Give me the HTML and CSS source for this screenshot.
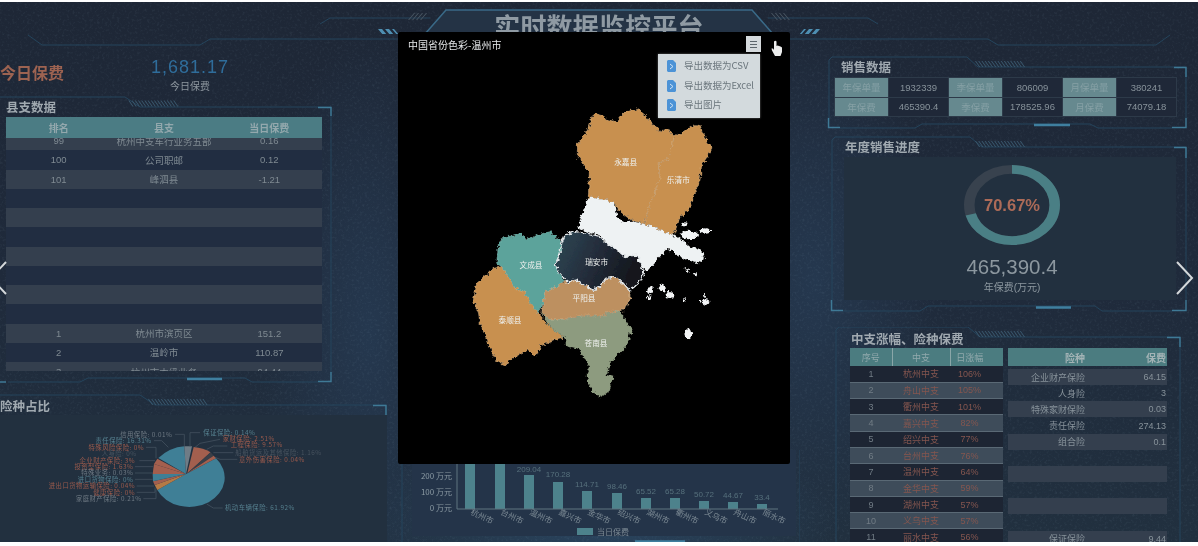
FILE: index.html
```html
<!DOCTYPE html>
<html lang="zh-CN">
<head>
<meta charset="utf-8">
<title>实时数据监控平台</title>
<link rel="stylesheet" href="styles.css">
</head>
<body>
<div class="screen">
  <svg class="noise" width="1198" height="540" aria-hidden="true">
    <defs>
      <filter id="speckle" x="0" y="0" width="100%" height="100%">
        <feTurbulence type="fractalNoise" baseFrequency="0.4" numOctaves="2" seed="7"/>
        <feColorMatrix type="matrix" values="0 0 0 0 0.42  0 0 0 0 0.62  0 0 0 0 0.75  1.6 0 0 0 -0.82"/>
      </filter>
    </defs>
    <rect width="1198" height="540" filter="url(#speckle)"/>
  </svg>

  <svg class="head-deco" width="1198" height="50" viewBox="0 2 1198 50" aria-hidden="true">
    <g>
      <path class="line" d="M28 35L42 45H200L210 39H416"/>
      <path class="line" d="M320 24L330 18H430"/>
      <path class="hatch-lit" transform="translate(378 29) skewX(40)" d="M0 2.500H16"/>
      <path class="hatch-gray" transform="translate(414 13) skewX(-40)" d="M0 3.500H16"/>
    </g>
    <g transform="matrix(-1 0 0 1 1198 0)">
      <path class="line" d="M28 35L42 45H200L210 39H416"/>
      <path class="line" d="M320 24L330 18H430"/>
      <path class="hatch-lit" transform="translate(378 29) skewX(40)" d="M0 2.500H16"/>
      <path class="hatch-gray" transform="translate(414 13) skewX(-40)" d="M0 3.500H16"/>
    </g>
    <path class="plate" d="M425 34L446 10H752L773 34"/>
  </svg>

  <header class="top"><h1 class="top-title">实时数据监控平台</h1></header>

  <main class="columns">
    <section class="col-left">
      <div class="today">
        <div class="today-name">今日保费</div>
        <div class="today-fig">
          <div class="today-num">1,681.17</div>
          <div class="today-label">今日保费</div>
        </div>
      </div>

      <div class="panel panel-county">
        <svg class="frame" width="332" height="286" viewBox="0 97 332 286" aria-hidden="true">
          <path class="line" d="M0 97H125L140 107H331V375"/>
          <path class="hatch" transform="translate(128 100) skewX(35)" d="M0 3.500H48"/>
          <path class="lit" d="M318 107.500H331V116"/>
          <path class="line" d="M8 382H80L88 378H245L252 382H318"/>
          <path class="lit" d="M0 382H6M318 381.500H331V372"/>
          <path class="bar" d="M187 379H222"/>
        </svg>
        <h2 class="panel-title title-county">县支数据</h2>
        <div class="county">
          <div class="county-head"><span>排名</span><span>县支</span><span>当日保费</span></div>
          <div class="county-body">
            <div class="county-row"><span>99</span><span>杭州中支车行业务五部</span><span>0.16</span></div>
            <div class="county-row"><span>100</span><span>公司职邮</span><span>0.12</span></div>
            <div class="county-row"><span>101</span><span>峰泗县</span><span>-1.21</span></div>
            <div class="county-row"></div>
            <div class="county-row"></div>
            <div class="county-row"></div>
            <div class="county-row"></div>
            <div class="county-row"></div>
            <div class="county-row"></div>
            <div class="county-row"></div>
            <div class="county-row"><span>1</span><span>杭州市滨页区</span><span>151.2</span></div>
            <div class="county-row"><span>2</span><span>温岭市</span><span>110.87</span></div>
            <div class="county-row"><span>3</span><span>杭州市本级业务</span><span>94.44</span></div>
          </div>
        </div>
      </div>

      <div class="panel panel-share">
        <svg class="frame" width="388" height="147" viewBox="0 395 388 147" aria-hidden="true">
          <path class="line" d="M0 395H140L155 405H386V542"/>
          <path class="hatch" transform="translate(148 399) skewX(35)" d="M0 3H56"/>
          <path class="lit" d="M373 405.500H386V420M386 530V542"/>
          <path class="bar" d="M217 540.500H257"/>
        </svg>
        <h2 class="panel-title title-share">险种占比</h2>
        <svg class="pie" width="387" height="127" viewBox="0 75 1161 381" role="img" aria-label="险种占比饼图">
          <path class="pie-teal" d="M558 252L648 205A106 88 0 1 1 472 300Z"/>
          <path class="pie-orange" d="M558 252L472 300L464 285Z"/>
          <path class="pie-coral" d="M558 252L464 285L459 274Z"/>
          <path class="pie-teal" d="M558 252L459 274L458 252Z"/>
          <path class="pie-coral" d="M558 252L458 252L462 222Z"/>
          <path class="pie-coral" d="M558 252L462 222L472 206Z"/>
          <path class="pie-teal" d="M558 252L475 204Q510 172 553 169Z"/>
          <path class="pie-gray" d="M558 252L553 169H576Z"/>
          <path class="pie-coral" d="M562 250L581 171Q610 174 632 187Z"/>
          <path class="pie-dark" d="M562 250L632 187L641 197Z"/>
          <path class="pie-coral" d="M562 250L641 197L648 205Z"/>
          <g class="leader">
            <path d="M525 133H553V170"/><path d="M600 128H570V170"/><path d="M660 148L600 160L585 172"/>
            <path d="M682 168H640L620 178"/><path d="M700 188H640"/><path d="M712 208H660L645 202"/>
            <path d="M462 152H485L505 172"/><path d="M438 172H468V205"/><path d="M418 212H465"/>
            <path d="M405 230H460"/><path d="M405 249H458"/><path d="M405 268H458"/>
            <path d="M410 288H462"/><path d="M410 307H465V292"/><path d="M430 326H468V298"/>
            <path d="M620 342L640 354H668"/>
          </g>
          <g class="pie-labels">
            <text class="l-gray end" x="517" y="140">信用保险: 0.01%</text>
            <text class="l-teal" x="610" y="135">保证保险: 0.14%</text>
            <text class="l-coral" x="668" y="152">家财保险: 2.51%</text>
            <text class="l-coral" x="692" y="172">工程保险: 9.57%</text>
            <text class="l-dim" x="706" y="194">船舶货运及其他保险: 1.16%</text>
            <text class="l-coral" x="717" y="215">意外伤害保险: 0.04%</text>
            <text class="l-teal end" x="455" y="159">责任保险: 16.31%</text>
            <text class="l-coral end" x="432" y="179">特殊风险保险: 0%</text>
            <text class="l-dim end" x="410" y="199">人身险: 0%</text>
            <text class="l-coral end" x="405" y="219">企业财产保险: 3%</text>
            <text class="l-coral end" x="400" y="237">投资型保险: 1.63%</text>
            <text class="l-gray end" x="400" y="256">特殊业务: 0.03%</text>
            <text class="l-teal end" x="400" y="275">进口货物保险: 0%</text>
            <text class="l-coral end" x="405" y="295">进出口货物运输保险: 0.04%</text>
            <text class="l-coral end" x="405" y="314">健康保险: 0%</text>
            <text class="l-gray end" x="425" y="333">家庭财产保险: 0.21%</text>
            <text class="l-teal" x="675" y="359">机动车辆保险: 61.92%</text>
          </g>
        </svg>
      </div>
    </section>

    <section class="col-center">
      <div class="panel panel-bars">
        <svg class="bars" width="400" height="92" viewBox="400 450 400 92" role="img" aria-label="当日保费柱状图">
          <rect class="bars-bg" x="412" y="450" width="384" height="86"/>
          <path class="line" d="M402 450V542M800 450V542"/>
          <path class="bar" d="M635 541.500H685"/>
          <g class="bar-set">
            <rect x="465" y="450" width="10" height="59"/><rect x="495" y="450" width="10" height="59"/>
            <rect x="524" y="475" width="10" height="34"/><rect x="553" y="482" width="10" height="27"/>
            <rect x="582" y="491" width="10" height="18"/><rect x="612" y="493" width="10" height="16"/>
            <rect x="641" y="498" width="10" height="11"/><rect x="670" y="498" width="10" height="11"/>
            <rect x="699" y="501" width="10" height="8"/><rect x="728" y="502" width="10" height="7"/>
            <rect x="757" y="504" width="10" height="5"/>
          </g>
          <path class="axis" d="M457 460V509H778"/>
          <g class="y-labels">
            <text x="452" y="479">200 万元</text><text x="452" y="495">100 万元</text><text x="452" y="511">0 万元</text>
          </g>
          <g class="bar-values">
            <text x="529" y="472">209.04</text><text x="558" y="477">170.28</text><text x="587" y="487">114.71</text>
            <text x="617" y="489">98.46</text><text x="646" y="494">65.52</text><text x="675" y="494">65.28</text>
            <text x="704" y="497">50.72</text><text x="733" y="498">44.67</text><text x="762" y="500">33.4</text>
          </g>
          <g class="x-labels">
            <text transform="translate(470 514) rotate(25)">杭州市</text><text transform="translate(500 514) rotate(25)">台州市</text>
            <text transform="translate(529 514) rotate(25)">温州市</text><text transform="translate(558 514) rotate(25)">嘉兴市</text>
            <text transform="translate(587 514) rotate(25)">金华市</text><text transform="translate(617 514) rotate(25)">绍兴市</text>
            <text transform="translate(646 514) rotate(25)">湖州市</text><text transform="translate(675 514) rotate(25)">衢州市</text>
            <text transform="translate(704 514) rotate(25)">义乌市</text><text transform="translate(733 514) rotate(25)">舟山市</text>
            <text transform="translate(762 514) rotate(25)">丽水市</text>
          </g>
          <rect class="legend-key" x="577" y="528" width="16" height="7"/>
          <text class="legend-text" x="597" y="535">当日保费</text>
        </svg>
      </div>
    </section>

    <section class="col-right">
      <div class="panel panel-sales">
        <svg class="frame" width="359" height="72" viewBox="828 57 359 72" aria-hidden="true">
          <path class="line" d="M829 128V60L832 57H967L978 67H1186V118"/>
          <path class="hatch" transform="translate(975 61) skewX(35)" d="M0 3H46"/>
          <path class="lit" d="M1174 67.500H1186V77M828.500 118V127.500H840M1172 127.500H1186V118"/>
          <path class="line" d="M840 128H915L922 124H1090L1098 128H1172"/>
          <path class="bar" d="M1034 125H1070"/>
        </svg>
        <h2 class="panel-title title-sales">销售数据</h2>
        <table class="sales">
          <tr><th>年保单量</th><td>1932339</td><th>季保单量</th><td>806009</td><th>月保单量</th><td>380241</td></tr>
          <tr><th>年保费</th><td>465390.4</td><th>季保费</th><td>178525.96</td><th>月保费</th><td>74079.18</td></tr>
        </table>
      </div>

      <div class="panel panel-progress">
        <svg class="frame" width="356" height="175" viewBox="831 137 356 175" aria-hidden="true">
          <path class="line" d="M832 310V140L835 137H970L982 147H1186V300"/>
          <path class="hatch" transform="translate(975 141) skewX(35)" d="M0 3H47"/>
          <path class="lit" d="M1174 147.500H1186V158M831.500 300V310.500H843M1172 310.500H1186V300"/>
          <path class="line" d="M843 311H920L928 306H1095L1102 311H1172"/>
          <path class="bar" d="M1036 307.500H1071"/>
        </svg>
        <h2 class="panel-title title-progress">年度销售进度</h2>
        <div class="progress">
          <div class="donut">
            <svg class="donut-ring" width="96" height="80" viewBox="0 0 100 100" preserveAspectRatio="none" aria-hidden="true">
              <circle class="ring-track" cx="50" cy="50" r="44.500"/>
              <circle class="ring-value" cx="50" cy="50" r="44.500" transform="rotate(-90 50 50)"/>
            </svg>
            <span class="donut-text">70.67%</span>
          </div>
          <div class="progress-num">465,390.4</div>
          <div class="progress-label">年保费(万元)</div>
        </div>
      </div>

      <div class="panel panel-branch">
        <svg class="frame" width="346" height="215" viewBox="835 327 346 215" aria-hidden="true">
          <path class="line" d="M836 542V330L839 327H968L980 337H1180V542"/>
          <path class="hatch" transform="translate(975 331) skewX(35)" d="M0 3H46"/>
          <path class="lit" d="M1167 337.500H1180V347"/>
        </svg>
        <h2 class="panel-title title-branch">中支涨幅、险种保费</h2>
        <div class="branch-tables">
          <table class="rank">
            <thead><tr><th>序号</th><th>中支</th><th>日涨幅</th></tr></thead>
            <tbody>
              <tr><td>1</td><td>杭州中支</td><td>106%</td></tr>
              <tr><td>2</td><td>舟山中支</td><td>105%</td></tr>
              <tr><td>3</td><td>衢州中支</td><td>101%</td></tr>
              <tr><td>4</td><td>嘉兴中支</td><td>82%</td></tr>
              <tr><td>5</td><td>绍兴中支</td><td>77%</td></tr>
              <tr><td>6</td><td>台州中支</td><td>76%</td></tr>
              <tr><td>7</td><td>温州中支</td><td>64%</td></tr>
              <tr><td>8</td><td>金华中支</td><td>59%</td></tr>
              <tr><td>9</td><td>湖州中支</td><td>57%</td></tr>
              <tr><td>10</td><td>义乌中支</td><td>57%</td></tr>
              <tr><td>11</td><td>丽水中支</td><td>56%</td></tr>
            </tbody>
          </table>
          <div class="kinds">
            <div class="kinds-head"><span>险种</span><span>保费</span></div>
            <div class="kinds-row"><span>企业财产保险</span><span>64.15</span></div>
            <div class="kinds-row"><span>人身险</span><span>3</span></div>
            <div class="kinds-row"><span>特殊家财保险</span><span>0.03</span></div>
            <div class="kinds-row"><span>责任保险</span><span>274.13</span></div>
            <div class="kinds-row"><span>组合险</span><span>0.1</span></div>
            <div class="kinds-row"></div>
            <div class="kinds-row"></div>
            <div class="kinds-row"></div>
            <div class="kinds-row"></div>
            <div class="kinds-row"></div>
            <div class="kinds-row"><span>保证保险</span><span>9.44</span></div>
          </div>
        </div>
      </div>
    </section>
  </main>

  <svg class="chevron chevron-left" width="8" height="36" viewBox="0 0 8 36" aria-hidden="true"><path d="M6 2L-9 18L6 34"/></svg>
  <svg class="chevron chevron-right" width="20" height="36" viewBox="0 0 20 36" aria-hidden="true"><path d="M2 2L17 18L2 34"/></svg>

  <div class="modal">
    <div class="modal-head">
      <div class="modal-title">中国省份色彩-温州市</div>
      <button class="menu-btn" type="button" aria-label="菜单"><i></i><i></i><i></i></button>
    </div>
    <svg class="map" width="270" height="310" viewBox="0 0 810 930" role="img" aria-label="温州市地图">
      <defs>
        <filter id="rough" x="-5%" y="-5%" width="110%" height="110%">
          <feTurbulence type="fractalNoise" baseFrequency="0.09" numOctaves="3" seed="4"/>
          <feDisplacementMap in="SourceGraphic" scale="18" xChannelSelector="R" yChannelSelector="G"/>
        </filter>
        <linearGradient id="ruian" x1="0" y1="0" x2="1" y2="0.3">
          <stop offset="0" stop-color="#2d4a55"/>
          <stop offset="0.45" stop-color="#26303f"/>
          <stop offset="1" stop-color="#12161c"/>
        </linearGradient>
      </defs>
      <g filter="url(#rough)">
        <polygon class="m-ochre" points="395,50 410,38 440,58 470,65 490,40 530,25 555,45 575,70 600,95 625,85 640,110 632,150 622,180 598,188 600,235 580,290 565,330 553,372 510,358 480,335 465,310 435,300 385,292 388,215 370,195 352,165 352,130 375,105 390,75"/>
        <polygon class="m-ochre" points="640,110 665,100 695,80 720,75 735,115 757,145 745,165 725,195 720,240 705,280 690,320 660,355 640,405 600,390 555,372 565,330 580,290 600,235 598,188 622,180 632,150"/>
        <polygon class="m-white" points="385,292 435,300 465,310 472,350 490,365 510,362 553,372 600,390 640,405 665,420 690,440 725,450 735,475 715,490 680,480 650,465 625,445 590,480 560,515 540,490 530,465 495,470 470,450 440,430 420,405 385,395 355,385 365,345 375,320"/>
        <polygon class="m-teal" points="130,410 160,408 185,400 195,420 235,405 270,395 300,420 305,430 300,460 285,495 300,520 310,545 280,565 255,575 250,610 235,640 210,610 195,575 165,565 145,530 125,500 110,490 115,435"/>
        <polygon class="m-ochre" points="125,500 145,530 165,565 195,575 210,610 235,640 270,680 312,712 280,720 245,735 225,770 205,750 165,770 135,795 105,780 85,730 60,670 55,635 40,600 50,550 80,525 100,505"/>
        <polygon class="m-sage" points="245,640 270,660 310,660 340,650 385,645 420,650 455,635 480,630 495,660 515,690 500,740 470,770 450,790 440,825 460,830 445,875 425,892 400,880 385,850 380,825 390,800 370,770 355,745 320,740 312,712 270,680"/>
        <polygon class="m-tan" points="320,545 350,540 375,555 400,572 420,560 440,535 465,530 490,550 510,572 510,600 490,630 455,635 420,650 385,645 340,650 310,660 270,660 245,640 255,575 280,565 310,545"/>
        <polygon class="m-dark" points="315,405 345,395 385,400 415,408 440,430 470,450 495,470 530,465 540,490 552,515 535,550 510,572 490,550 465,530 440,535 420,560 400,572 375,555 350,540 320,545 300,520 285,495 300,460 305,430"/>
        <g class="m-isles">
          <ellipse cx="688" cy="405" rx="26" ry="13"/><ellipse cx="736" cy="393" rx="15" ry="8"/><ellipse cx="675" cy="373" rx="10" ry="6"/>
          <ellipse cx="570" cy="572" rx="9" ry="10"/><ellipse cx="605" cy="565" rx="9" ry="11"/><ellipse cx="628" cy="585" rx="12" ry="9"/>
          <ellipse cx="568" cy="595" rx="5" ry="6"/><ellipse cx="738" cy="606" rx="10" ry="8"/><ellipse cx="720" cy="604" rx="4" ry="4"/>
          <ellipse cx="674" cy="600" rx="4" ry="5"/><ellipse cx="705" cy="522" rx="6" ry="5"/><ellipse cx="682" cy="510" rx="5" ry="6"/>
          <ellipse cx="685" cy="702" rx="12" ry="16"/><ellipse cx="732" cy="585" rx="3" ry="6"/>
        </g>
      </g>
      <g class="m-labels">
        <text x="497" y="195">永嘉县</text><text x="655" y="248">乐清市</text><text x="213" y="503">文成县</text>
        <text x="410" y="494">瑞安市</text><text x="372" y="604">平阳县</text><text x="150" y="668">泰顺县</text><text x="408" y="737">苍南县</text>
      </g>
    </svg>
    <ul class="menu">
      <li><svg class="doc" width="9" height="12" viewBox="0 0 9 12" aria-hidden="true"><path d="M1 0H6L9 3V11L8 12H1L0 11V1Z"/><path class="doc-mark" d="M3 4L6 6.500L3 9"/></svg>导出数据为CSV</li>
      <li><svg class="doc" width="9" height="12" viewBox="0 0 9 12" aria-hidden="true"><path d="M1 0H6L9 3V11L8 12H1L0 11V1Z"/><path class="doc-mark" d="M3 4L6 6.500L3 9"/></svg>导出数据为Excel</li>
      <li><svg class="doc" width="9" height="12" viewBox="0 0 9 12" aria-hidden="true"><path d="M1 0H6L9 3V11L8 12H1L0 11V1Z"/><path class="doc-mark" d="M3 4L6 6.500L3 9"/></svg>导出图片</li>
    </ul>
    <svg class="hand" width="12" height="17" viewBox="0 0 12 17" aria-hidden="true"><path d="M3 1.500Q4.500 0 5.500 1.500V6L6.500 5.500L8 6L9.500 6.500L11 7.500V12L9.500 16H4L1 10.500L0.500 8.500L2 8.500L3 10Z"/></svg>
  </div>
</div>
</body>
</html>
```
FILE: styles.css
```css
* { box-sizing: border-box; }
html, body { margin: 0; padding: 0; }
body {
  width: 1198px;
  height: 546px;
  padding-top: 2px;
  overflow: hidden;
  background: #fff;
  font-family: "Liberation Sans", "Noto Sans CJK SC", sans-serif;
}
.screen {
  position: relative;
  width: 1198px;
  height: 540px;
  overflow: hidden;
  color: #96a2aa;
  filter: blur(0.6px);
  background:
    radial-gradient(ellipse 110px 300px at 370px 330px, #25384f 0%, rgba(37,56,79,0) 100%),
    radial-gradient(ellipse 120px 260px at 815px 280px, #25384f 0%, rgba(37,56,79,0) 100%),
    radial-gradient(ellipse 240px 90px at 600px 520px, #2a4560 0%, rgba(42,69,96,0) 100%),
    linear-gradient(180deg, #1e2736 0%, #1f2a3b 50%, #21303f 100%);
}
.noise { position: absolute; left: 0; top: 0; opacity: 0.13; }
.head-deco { position: absolute; left: 0; top: 0; }
.line, .lit, .bar, .axis, .leader path { fill: none; }
.line { stroke: #24445c; stroke-width: 1; }
.lit { stroke: #3f7a96; stroke-width: 1.4; }
.bar { stroke: #3f7f9f; stroke-width: 2.5; }
.plate { stroke: #3a6a88; stroke-width: 1.5; fill: #243345; }
.hatch { fill: none; stroke: #3b5a70; stroke-width: 6; stroke-dasharray: 1 2.2; }
.hatch-lit { fill: none; stroke: #4e8fb2; stroke-width: 5; stroke-dasharray: 4 3; }
.hatch-gray { fill: none; stroke: #4d5a66; stroke-width: 7; stroke-dasharray: 1 3; }

.top { position: relative; height: 44px; padding-top: 2px; text-align: center; }
.top-title {
  margin: 0;
  font: 700 26px/44px "Noto Sans CJK SC", sans-serif;
  letter-spacing: 0.2px;
  color: #8f9aa3;
}

.columns {
  position: relative;
  display: grid;
  grid-template-columns: 400px 428px 370px;
  height: 496px;
}
.col-left, .col-center, .col-right { display: flex; flex-direction: column; min-width: 0; }
.col-center { justify-content: flex-end; }

.panel { position: relative; }
.frame { position: absolute; left: 0; top: 0; overflow: visible; }
.panel-title {
  position: relative;
  margin: 0;
  height: 20px;
  font: 700 12.500px/18px "Noto Sans CJK SC", sans-serif;
  color: #a0a9b0;
}

.today { position: relative; display: flex; height: 51px; }
.today-name {
  width: 151px;
  padding-top: 15px;
  font: 700 16px/22px "Noto Sans CJK SC", sans-serif;
  color: #9d6351;
}
.today-fig { width: 78px; text-align: center; }
.today-num {
  margin-top: 10px;
  font-size: 18px;
  line-height: 22px;
  letter-spacing: 1px;
  white-space: nowrap;
  color: #2f6d9b;
}
.today-label { margin-top: 2px; font-size: 10px; line-height: 14px; color: #8f98a0; }

.panel-county { width: 332px; height: 298px; }
.title-county { padding: 1px 0 0 6px; }
.county { position: relative; width: 316px; margin-left: 6px; background: #212d41; }
.county-head, .county-row { display: grid; grid-template-columns: repeat(3, 1fr); text-align: center; align-items: center; }
.county-head { position: relative; height: 21px; background: #4b7c84; font-size: 10px; font-weight: 700; color: #93a8ad; }
.county-body { height: 233px; overflow: hidden; padding-top: 0; }
.county-row { height: 19.250px; font-size: 9.500px; color: #7f8a92; }
.county-row:first-child { margin-top: -7px; }
.county-row:nth-child(odd) { background: #343f4e; }

.panel-share { width: 388px; height: 147px; }
.title-share { padding-top: 2px; }
.pie { position: relative; display: block; background: #22303f; }
.pie-teal { fill: #3f7f96; }
.pie-coral { fill: #a35f4e; }
.pie-orange { fill: #b57a45; }
.pie-gray { fill: #6f7c86; }
.pie-dark { fill: #3b3f48; }
.leader path { stroke: #4a5865; stroke-width: 2; }
.pie-labels { font: 19px "Noto Sans CJK SC", sans-serif; letter-spacing: 1.5px; }
.pie-labels .end { text-anchor: end; }
.l-gray { fill: #6f7a84; }
.l-teal { fill: #56808f; }
.l-coral { fill: #9a5a4c; }
.l-dim { fill: #47535f; }

.panel-bars { height: 92px; }
.bars { display: block; }
.bars-bg { fill: #243449; }
.bar-set rect { fill: #4d828c; }
.axis { stroke: #5f7480; stroke-width: 1; }
.y-labels text { font: 8px "Noto Sans CJK SC", sans-serif; fill: #8b9aa3; text-anchor: end; }
.bar-values text { font: 8px "Liberation Sans", sans-serif; fill: #56707c; text-anchor: middle; }
.x-labels text { font: 8px "Noto Sans CJK SC", sans-serif; fill: #7c8a94; }
.legend-key { fill: #4d828c; }
.legend-text { font: 8px "Noto Sans CJK SC", sans-serif; fill: #7c8a94; }

.col-right { padding-top: 11px; }
.panel-sales { width: 359px; height: 72px; }
.title-sales { padding: 1px 0 0 13px; }
.sales {
  position: relative;
  width: 343px;
  height: 40px;
  margin: 0 0 0 6px;
  border-collapse: collapse;
  table-layout: fixed;
  font-size: 9.500px;
}
.sales th, .sales td { border: 1px solid #2d3a49; padding: 0; text-align: center; }
.sales th { width: 54px; background: #66898f; font-weight: 400; color: #86a0a5; }
.sales td { background: #1f2838; color: #87929a; }

.panel-progress { width: 356px; height: 175px; margin: 8px 0 0 3px; }
.title-progress { padding: 1px 0 0 14px; }
.progress {
  position: relative;
  width: 332px;
  height: 143px;
  margin-left: 13px;
  padding-top: 8px;
  background: #22303f;
  text-align: center;
}
.donut { position: relative; width: 96px; height: 80px; margin: 0 auto; transform: translateX(2px); }
.donut-ring { display: block; }
.ring-track, .ring-value { fill: none; stroke-width: 11; }
.ring-track { stroke: #38424e; }
.ring-value { stroke: #4a7f85; stroke-dasharray: 197.6 280; }
.donut-text {
  position: absolute;
  left: 0;
  right: 0;
  top: 30px;
  font-size: 16.500px;
  line-height: 20px;
  font-weight: 700;
  color: #ad6b58;
}
.progress-num { margin-top: 11px; font-size: 20.500px; line-height: 22px; color: #8c979f; transform: translateX(2px); }
.progress-label { margin-top: 3px; font-size: 10px; line-height: 14px; color: #8d98a0; transform: translateX(2px); }

.panel-branch { width: 346px; height: 215px; margin: 15px 0 0 7px; overflow: hidden; }
.title-branch { height: 21px; padding: 3px 0 0 16px; }
.branch-tables { position: relative; display: flex; gap: 5px; margin-left: 15px; align-items: flex-start; }
.rank { width: 153px; border-collapse: collapse; table-layout: fixed; font-size: 9px; flex: none; }
.rank th {
  height: 18px;
  padding: 0;
  background: #4b7c80;
  border-right: 1px solid #8aa6a8;
  font-weight: 400;
  color: #92a9ac;
}
.rank th:first-child { width: 42px; }
.rank th:nth-child(2) { width: 58px; }
.rank th:last-child { border-right: 0; padding-right: 14px; }
.rank td { height: 16.300px; padding: 0; text-align: center; color: #85564f; background: #1d2533; }
.rank td:first-child { color: #717c85; }
.rank td:last-child { padding-right: 14px; }
.rank tbody tr:nth-child(even) td { background: #3e4c5a; border-top: 1px solid #5a6975; border-bottom: 1px solid #5a6975; }
.kinds { width: 159px; font-size: 9px; flex: none; }
.kinds-head, .kinds-row { display: grid; grid-template-columns: 77px 1fr; align-items: center; text-align: right; padding-right: 1px; }
.kinds-head {
  height: 18px;
  margin-bottom: 3px;
  background: #4b7c80;
  font-weight: 700;
  font-size: 10px;
  color: #a4b4b6;
}
.kinds-row { height: 16.170px; color: #87929a; }
.kinds-row:nth-child(even) { background: #343f4e; }

.chevron { position: absolute; fill: none; stroke: #d4d8da; stroke-width: 2; }
.chevron-left { left: 0; top: 258px; }
.chevron-right { left: 1175px; top: 258px; }

.modal {
  position: absolute;
  left: 398px;
  top: 30px;
  width: 392px;
  height: 432px;
  display: flex;
  flex-direction: column;
  background: #000;
  border-radius: 2px;
}
.modal-head { display: flex; justify-content: space-between; height: 68px; padding: 4px 29px 0 10px; }
.modal-title { font: 10px/18px "Noto Sans CJK SC", sans-serif; color: #e4e6e8; }
.menu-btn {
  display: flex;
  flex-direction: column;
  justify-content: center;
  gap: 2px;
  width: 15px;
  height: 16px;
  padding: 0 4px;
  border: 0;
  background: #d5dadd;
}
.menu-btn i { display: block; height: 1px; background: #5d666c; }
.map { display: block; margin-left: 62px; }
.m-ochre { fill: #c8904f; stroke: #dcb98c; stroke-width: 1.500; }
.m-tan { fill: #bd9060; stroke: #dcc4a0; stroke-width: 1.500; }
.m-teal { fill: #5ba39b; stroke: #8fc4bd; stroke-width: 1.500; }
.m-sage { fill: #8d9b7f; }
.m-white { fill: #eef2f3; }
.m-dark { fill: url(#ruian); stroke: #e4e8ea; stroke-width: 4; }
.m-isles { fill: #f2f4f5; }
.m-labels text { font: 23px "Noto Sans CJK SC", sans-serif; fill: #eef0ee; text-anchor: middle; }

.menu {
  position: absolute;
  left: 260px;
  top: 22px;
  width: 102px;
  height: 64px;
  margin: 0;
  padding: 2px 0 0 9px;
  list-style: none;
  background: #d3dadd;
  font: 9.500px/19.700px "Noto Sans CJK SC", sans-serif;
  color: #6a757c;
  box-shadow: 0 0 2px rgba(255,255,255,.4);
}
.menu li { display: flex; align-items: center; gap: 8px; height: 19.700px; white-space: nowrap; }
.doc { flex: none; fill: #4c93d6; }
.doc-mark { fill: none; stroke: #cfe2f4; stroke-width: 1; }
.hand { position: absolute; left: 373px; top: 8px; fill: #eceded; }
```
